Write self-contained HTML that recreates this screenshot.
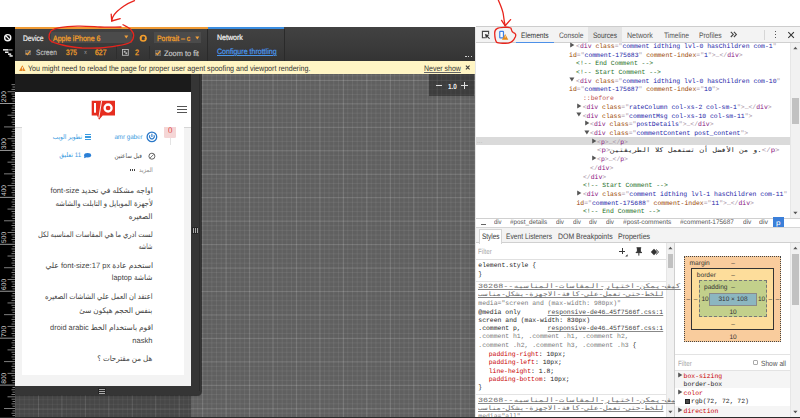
<!DOCTYPE html><html><head><meta charset="utf-8"><style>
*{margin:0;padding:0;box-sizing:border-box}
html,body{width:800px;height:418px;overflow:hidden;background:#fff;font-family:"Liberation Sans",sans-serif;text-rendering:geometricPrecision}
.a{position:absolute;white-space:nowrap}
.ui{font-family:"Liberation Sans",sans-serif;font-size:7px;line-height:8px}
.mono{font-family:"Liberation Mono",monospace;font-size:6.43px;line-height:8px}
</style></head><body><div class="a" style="left:0px;top:26.5px;width:15px;height:391.5px;background:#000"></div><svg class="a" style="left:0;top:26.5px" width="15" height="34" viewBox="0 26.5 15 34"><circle cx="7.7" cy="37.2" r="3.05" fill="none" stroke="#f4f4f4" stroke-width="1.4"/><line x1="5.5" y1="35.0" x2="9.9" y2="39.4" stroke="#f4f4f4" stroke-width="1.3"/><rect x="3" y="48.6" width="5" height="1.5" fill="#f0f0f0"/><rect x="8" y="48.6" width="4.5" height="1.5" fill="#888"/><rect x="5" y="51.0" width="3.5" height="1.5" fill="#f0f0f0"/><rect x="8" y="52.9" width="3.2" height="1.5" fill="#f0f0f0"/><rect x="9.5" y="54.7" width="3.2" height="1.5" fill="#f0f0f0"/></svg><svg class="a" style="left:0;top:0" width="15" height="418" viewBox="0 0 15 418"><rect x="11.5" y="84.22" width="3.5" height="0.9" fill="#8a8a8a"/><rect x="12.5" y="86.57" width="2.5" height="0.9" fill="#8a8a8a"/><rect x="11.5" y="88.92" width="3.5" height="0.9" fill="#8a8a8a"/><rect x="7.5" y="91.27" width="7.5" height="0.9" fill="#8a8a8a"/><rect x="11.5" y="93.61" width="3.5" height="0.9" fill="#8a8a8a"/><rect x="12.5" y="95.96" width="2.5" height="0.9" fill="#8a8a8a"/><rect x="11.5" y="98.31" width="3.5" height="0.9" fill="#8a8a8a"/><rect x="12.5" y="100.65" width="2.5" height="0.9" fill="#8a8a8a"/><rect x="0" y="103.00" width="15" height="0.9" fill="#aaa"/><rect x="12.5" y="105.35" width="2.5" height="0.9" fill="#8a8a8a"/><rect x="11.5" y="107.69" width="3.5" height="0.9" fill="#8a8a8a"/><rect x="12.5" y="110.04" width="2.5" height="0.9" fill="#8a8a8a"/><rect x="11.5" y="112.39" width="3.5" height="0.9" fill="#8a8a8a"/><rect x="7.5" y="114.73" width="7.5" height="0.9" fill="#8a8a8a"/><rect x="11.5" y="117.08" width="3.5" height="0.9" fill="#8a8a8a"/><rect x="12.5" y="119.43" width="2.5" height="0.9" fill="#8a8a8a"/><rect x="11.5" y="121.78" width="3.5" height="0.9" fill="#8a8a8a"/><rect x="12.5" y="124.12" width="2.5" height="0.9" fill="#8a8a8a"/><rect x="4" y="126.47" width="11" height="0.9" fill="#8a8a8a"/><rect x="12.5" y="128.82" width="2.5" height="0.9" fill="#8a8a8a"/><rect x="11.5" y="131.16" width="3.5" height="0.9" fill="#8a8a8a"/><rect x="12.5" y="133.51" width="2.5" height="0.9" fill="#8a8a8a"/><rect x="11.5" y="135.86" width="3.5" height="0.9" fill="#8a8a8a"/><rect x="7.5" y="138.21" width="7.5" height="0.9" fill="#8a8a8a"/><rect x="11.5" y="140.55" width="3.5" height="0.9" fill="#8a8a8a"/><rect x="12.5" y="142.90" width="2.5" height="0.9" fill="#8a8a8a"/><rect x="11.5" y="145.25" width="3.5" height="0.9" fill="#8a8a8a"/><rect x="12.5" y="147.59" width="2.5" height="0.9" fill="#8a8a8a"/><rect x="0" y="149.94" width="15" height="0.9" fill="#aaa"/><rect x="12.5" y="152.29" width="2.5" height="0.9" fill="#8a8a8a"/><rect x="11.5" y="154.63" width="3.5" height="0.9" fill="#8a8a8a"/><rect x="12.5" y="156.98" width="2.5" height="0.9" fill="#8a8a8a"/><rect x="11.5" y="159.33" width="3.5" height="0.9" fill="#8a8a8a"/><rect x="7.5" y="161.68" width="7.5" height="0.9" fill="#8a8a8a"/><rect x="11.5" y="164.02" width="3.5" height="0.9" fill="#8a8a8a"/><rect x="12.5" y="166.37" width="2.5" height="0.9" fill="#8a8a8a"/><rect x="11.5" y="168.72" width="3.5" height="0.9" fill="#8a8a8a"/><rect x="12.5" y="171.06" width="2.5" height="0.9" fill="#8a8a8a"/><rect x="4" y="173.41" width="11" height="0.9" fill="#8a8a8a"/><rect x="12.5" y="175.76" width="2.5" height="0.9" fill="#8a8a8a"/><rect x="11.5" y="178.10" width="3.5" height="0.9" fill="#8a8a8a"/><rect x="12.5" y="180.45" width="2.5" height="0.9" fill="#8a8a8a"/><rect x="11.5" y="182.80" width="3.5" height="0.9" fill="#8a8a8a"/><rect x="7.5" y="185.15" width="7.5" height="0.9" fill="#8a8a8a"/><rect x="11.5" y="187.49" width="3.5" height="0.9" fill="#8a8a8a"/><rect x="12.5" y="189.84" width="2.5" height="0.9" fill="#8a8a8a"/><rect x="11.5" y="192.19" width="3.5" height="0.9" fill="#8a8a8a"/><rect x="12.5" y="194.53" width="2.5" height="0.9" fill="#8a8a8a"/><rect x="0" y="196.88" width="15" height="0.9" fill="#aaa"/><rect x="12.5" y="199.23" width="2.5" height="0.9" fill="#8a8a8a"/><rect x="11.5" y="201.57" width="3.5" height="0.9" fill="#8a8a8a"/><rect x="12.5" y="203.92" width="2.5" height="0.9" fill="#8a8a8a"/><rect x="11.5" y="206.27" width="3.5" height="0.9" fill="#8a8a8a"/><rect x="7.5" y="208.62" width="7.5" height="0.9" fill="#8a8a8a"/><rect x="11.5" y="210.96" width="3.5" height="0.9" fill="#8a8a8a"/><rect x="12.5" y="213.31" width="2.5" height="0.9" fill="#8a8a8a"/><rect x="11.5" y="215.66" width="3.5" height="0.9" fill="#8a8a8a"/><rect x="12.5" y="218.00" width="2.5" height="0.9" fill="#8a8a8a"/><rect x="4" y="220.35" width="11" height="0.9" fill="#8a8a8a"/><rect x="12.5" y="222.70" width="2.5" height="0.9" fill="#8a8a8a"/><rect x="11.5" y="225.04" width="3.5" height="0.9" fill="#8a8a8a"/><rect x="12.5" y="227.39" width="2.5" height="0.9" fill="#8a8a8a"/><rect x="11.5" y="229.74" width="3.5" height="0.9" fill="#8a8a8a"/><rect x="7.5" y="232.09" width="7.5" height="0.9" fill="#8a8a8a"/><rect x="11.5" y="234.43" width="3.5" height="0.9" fill="#8a8a8a"/><rect x="12.5" y="236.78" width="2.5" height="0.9" fill="#8a8a8a"/><rect x="11.5" y="239.13" width="3.5" height="0.9" fill="#8a8a8a"/><rect x="12.5" y="241.47" width="2.5" height="0.9" fill="#8a8a8a"/><rect x="0" y="243.82" width="15" height="0.9" fill="#aaa"/><rect x="12.5" y="246.17" width="2.5" height="0.9" fill="#8a8a8a"/><rect x="11.5" y="248.51" width="3.5" height="0.9" fill="#8a8a8a"/><rect x="12.5" y="250.86" width="2.5" height="0.9" fill="#8a8a8a"/><rect x="11.5" y="253.21" width="3.5" height="0.9" fill="#8a8a8a"/><rect x="7.5" y="255.56" width="7.5" height="0.9" fill="#8a8a8a"/><rect x="11.5" y="257.90" width="3.5" height="0.9" fill="#8a8a8a"/><rect x="12.5" y="260.25" width="2.5" height="0.9" fill="#8a8a8a"/><rect x="11.5" y="262.60" width="3.5" height="0.9" fill="#8a8a8a"/><rect x="12.5" y="264.94" width="2.5" height="0.9" fill="#8a8a8a"/><rect x="4" y="267.29" width="11" height="0.9" fill="#8a8a8a"/><rect x="12.5" y="269.64" width="2.5" height="0.9" fill="#8a8a8a"/><rect x="11.5" y="271.98" width="3.5" height="0.9" fill="#8a8a8a"/><rect x="12.5" y="274.33" width="2.5" height="0.9" fill="#8a8a8a"/><rect x="11.5" y="276.68" width="3.5" height="0.9" fill="#8a8a8a"/><rect x="7.5" y="279.02" width="7.5" height="0.9" fill="#8a8a8a"/><rect x="11.5" y="281.37" width="3.5" height="0.9" fill="#8a8a8a"/><rect x="12.5" y="283.72" width="2.5" height="0.9" fill="#8a8a8a"/><rect x="11.5" y="286.07" width="3.5" height="0.9" fill="#8a8a8a"/><rect x="12.5" y="288.41" width="2.5" height="0.9" fill="#8a8a8a"/><rect x="0" y="290.76" width="15" height="0.9" fill="#aaa"/><rect x="12.5" y="293.11" width="2.5" height="0.9" fill="#8a8a8a"/><rect x="11.5" y="295.45" width="3.5" height="0.9" fill="#8a8a8a"/><rect x="12.5" y="297.80" width="2.5" height="0.9" fill="#8a8a8a"/><rect x="11.5" y="300.15" width="3.5" height="0.9" fill="#8a8a8a"/><rect x="7.5" y="302.50" width="7.5" height="0.9" fill="#8a8a8a"/><rect x="11.5" y="304.84" width="3.5" height="0.9" fill="#8a8a8a"/><rect x="12.5" y="307.19" width="2.5" height="0.9" fill="#8a8a8a"/><rect x="11.5" y="309.54" width="3.5" height="0.9" fill="#8a8a8a"/><rect x="12.5" y="311.88" width="2.5" height="0.9" fill="#8a8a8a"/><rect x="4" y="314.23" width="11" height="0.9" fill="#8a8a8a"/><rect x="12.5" y="316.58" width="2.5" height="0.9" fill="#8a8a8a"/><rect x="11.5" y="318.92" width="3.5" height="0.9" fill="#8a8a8a"/><rect x="12.5" y="321.27" width="2.5" height="0.9" fill="#8a8a8a"/><rect x="11.5" y="323.62" width="3.5" height="0.9" fill="#8a8a8a"/><rect x="7.5" y="325.96" width="7.5" height="0.9" fill="#8a8a8a"/><rect x="11.5" y="328.31" width="3.5" height="0.9" fill="#8a8a8a"/><rect x="12.5" y="330.66" width="2.5" height="0.9" fill="#8a8a8a"/><rect x="11.5" y="333.01" width="3.5" height="0.9" fill="#8a8a8a"/><rect x="12.5" y="335.35" width="2.5" height="0.9" fill="#8a8a8a"/><rect x="0" y="337.70" width="15" height="0.9" fill="#aaa"/><rect x="12.5" y="340.05" width="2.5" height="0.9" fill="#8a8a8a"/><rect x="11.5" y="342.39" width="3.5" height="0.9" fill="#8a8a8a"/><rect x="12.5" y="344.74" width="2.5" height="0.9" fill="#8a8a8a"/><rect x="11.5" y="347.09" width="3.5" height="0.9" fill="#8a8a8a"/><rect x="7.5" y="349.44" width="7.5" height="0.9" fill="#8a8a8a"/><rect x="11.5" y="351.78" width="3.5" height="0.9" fill="#8a8a8a"/><rect x="12.5" y="354.13" width="2.5" height="0.9" fill="#8a8a8a"/><rect x="11.5" y="356.48" width="3.5" height="0.9" fill="#8a8a8a"/><rect x="12.5" y="358.82" width="2.5" height="0.9" fill="#8a8a8a"/><rect x="4" y="361.17" width="11" height="0.9" fill="#8a8a8a"/><rect x="12.5" y="363.52" width="2.5" height="0.9" fill="#8a8a8a"/><rect x="11.5" y="365.86" width="3.5" height="0.9" fill="#8a8a8a"/><rect x="12.5" y="368.21" width="2.5" height="0.9" fill="#8a8a8a"/><rect x="11.5" y="370.56" width="3.5" height="0.9" fill="#8a8a8a"/><rect x="7.5" y="372.90" width="7.5" height="0.9" fill="#8a8a8a"/><rect x="11.5" y="375.25" width="3.5" height="0.9" fill="#8a8a8a"/><rect x="12.5" y="377.60" width="2.5" height="0.9" fill="#8a8a8a"/><rect x="11.5" y="379.95" width="3.5" height="0.9" fill="#8a8a8a"/><rect x="12.5" y="382.29" width="2.5" height="0.9" fill="#8a8a8a"/><rect x="0" y="384.64" width="15" height="0.9" fill="#aaa"/><rect x="12.5" y="386.99" width="2.5" height="0.9" fill="#8a8a8a"/><rect x="11.5" y="389.33" width="3.5" height="0.9" fill="#8a8a8a"/><rect x="12.5" y="391.68" width="2.5" height="0.9" fill="#8a8a8a"/><rect x="11.5" y="394.03" width="3.5" height="0.9" fill="#8a8a8a"/><rect x="7.5" y="396.38" width="7.5" height="0.9" fill="#8a8a8a"/><rect x="11.5" y="398.72" width="3.5" height="0.9" fill="#8a8a8a"/><rect x="12.5" y="401.07" width="2.5" height="0.9" fill="#8a8a8a"/><rect x="11.5" y="403.42" width="3.5" height="0.9" fill="#8a8a8a"/><rect x="12.5" y="405.76" width="2.5" height="0.9" fill="#8a8a8a"/><rect x="4" y="408.11" width="11" height="0.9" fill="#8a8a8a"/><rect x="12.5" y="410.46" width="2.5" height="0.9" fill="#8a8a8a"/><rect x="11.5" y="412.80" width="3.5" height="0.9" fill="#8a8a8a"/><rect x="12.5" y="415.15" width="2.5" height="0.9" fill="#8a8a8a"/><rect x="11.5" y="417.50" width="3.5" height="0.9" fill="#8a8a8a"/><text x="0" y="0" transform="translate(6.4,102.20) rotate(-90)" font-family="Liberation Sans" font-size="6.7" fill="#d8d8d8">200</text><text x="0" y="0" transform="translate(6.4,149.14) rotate(-90)" font-family="Liberation Sans" font-size="6.7" fill="#d8d8d8">300</text><text x="0" y="0" transform="translate(6.4,196.08) rotate(-90)" font-family="Liberation Sans" font-size="6.7" fill="#d8d8d8">400</text><text x="0" y="0" transform="translate(6.4,243.02) rotate(-90)" font-family="Liberation Sans" font-size="6.7" fill="#d8d8d8">500</text><text x="0" y="0" transform="translate(6.4,289.96) rotate(-90)" font-family="Liberation Sans" font-size="6.7" fill="#d8d8d8">600</text><text x="0" y="0" transform="translate(6.4,336.90) rotate(-90)" font-family="Liberation Sans" font-size="6.7" fill="#d8d8d8">700</text><text x="0" y="0" transform="translate(6.4,383.84) rotate(-90)" font-family="Liberation Sans" font-size="6.7" fill="#d8d8d8">800</text></svg><div class="a" style="left:15px;top:26.5px;width:460px;height:34.2px;background:linear-gradient(#424242,#3a3a3a 60%,#333)"></div><div class="a" style="left:15px;top:26.8px;width:192.5px;height:2.3px;background:#ef9a34"></div><div class="a" style="left:207.5px;top:26.8px;width:76.5px;height:2.3px;background:#3a8de0"></div><div class="a" style="left:207px;top:29px;width:1px;height:31.5px;background:#2a2a2a"></div><div class="a" style="left:284px;top:29px;width:1px;height:31.5px;background:#2a2a2a"></div><div class="a" style="left:23.00px;top:33.60px;line-height:10px;font-family:'Liberation Sans',sans-serif;font-size:8.09px;color:#f2f2f2;transform-origin:0 50%;transform:scaleX(0.8291);-webkit-text-stroke:0.2px #f2f2f2">Device</div><div class="a" style="left:51px;top:31.5px;width:81px;height:11.5px;background:#4b4b4b"></div><div class="a" style="left:53.00px;top:33.60px;line-height:10px;font-family:'Liberation Sans',sans-serif;font-size:7.82px;color:#f5a02a;transform-origin:0 50%;transform:scaleX(0.8954);-webkit-text-stroke:0.25px #f5a02a">Apple iPhone 6</div><svg class="a" style="left:124px;top:35px" width="5" height="4"><path d="M0.3 0.5 L4.3 0.5 L2.3 3.5Z" fill="#f0a03c"/></svg><svg class="a" style="left:139.15px;top:33.8px" width="8.5" height="8.5" viewBox="0 0 8.5 8.5"><circle cx="4.25" cy="4.25" r="2.75" fill="none" stroke="#f29e2e" stroke-width="1.6"/><path d="M0.6 3.6 L2.3 5.2 L3.2 3.2Z M7.9 4.9 L6.2 3.3 L5.3 5.3Z" fill="#f29e2e"/></svg><div class="a" style="left:153.8px;top:32.1px;width:46.8px;height:10.5px;background:#4b4b4b"></div><div class="a" style="left:156.80px;top:33.60px;line-height:10px;font-family:'Liberation Sans',sans-serif;font-size:7.82px;color:#f5a02a;transform-origin:0 50%;transform:scaleX(0.8782);-webkit-text-stroke:0.25px #f5a02a">Portrait – c</div><svg class="a" style="left:194.5px;top:35.5px" width="5" height="4"><path d="M0.3 0.5 L4.3 0.5 L2.3 3.5Z" fill="#f0a03c"/></svg><div class="a" style="left:25px;top:49.8px;width:5.6px;height:5.6px;background:#555;border:0.6px solid #666"></div><svg class="a" style="left:25px;top:49.8px" width="6" height="6" viewBox="0 0 6 6"><path d="M0.9 3.1 L2.4 4.6 L5.3 0.9" fill="none" stroke="#f0a03c" stroke-width="1.2"/></svg><div class="a" style="left:36.20px;top:48.30px;line-height:10px;font-family:'Liberation Sans',sans-serif;font-size:7.75px;color:#c0c0c0;transform-origin:0 50%;transform:scaleX(0.8466);-webkit-text-stroke:0.15px #c0c0c0">Screen</div><div class="a" style="left:65.50px;top:48.30px;line-height:10px;font-family:'Liberation Sans',sans-serif;font-size:7.75px;color:#f5a02a;transform-origin:0 50%;transform:scaleX(0.8499);-webkit-text-stroke:0.25px #f5a02a">375</div><div class="a" style="left:83.50px;top:47.90px;line-height:10px;font-family:'Liberation Sans',sans-serif;font-size:7.60px;color:#999;transform-origin:0 50%;transform:scaleX(0.6748);">×</div><div class="a" style="left:94.50px;top:48.30px;line-height:10px;font-family:'Liberation Sans',sans-serif;font-size:7.75px;color:#f5a02a;transform-origin:0 50%;transform:scaleX(0.8885);-webkit-text-stroke:0.25px #f5a02a">627</div><div class="a" style="left:115.5px;top:46px;width:0.8px;height:13px;background:#2e2e2e"></div><svg class="a" style="left:121.5px;top:48.7px" width="7" height="7" viewBox="0 0 7 7"><rect x="0.5" y="0.5" width="5.8" height="5.8" fill="none" stroke="#bbb" stroke-width="0.9"/><rect x="1.8" y="1.8" width="1.8" height="1.8" fill="#bbb"/><rect x="3.4" y="3.4" width="1.8" height="1.8" fill="#bbb"/></svg><div class="a" style="left:135.00px;top:48.30px;line-height:10px;font-family:'Liberation Sans',sans-serif;font-size:7.75px;color:#f5a02a;transform-origin:0 50%;transform:scaleX(0.9299);-webkit-text-stroke:0.25px #f5a02a">2</div><div class="a" style="left:148.5px;top:46px;width:0.8px;height:13px;background:#2e2e2e"></div><div class="a" style="left:155px;top:50px;width:5.6px;height:5.6px;background:#555;border:0.6px solid #666"></div><svg class="a" style="left:155px;top:50px" width="6" height="6" viewBox="0 0 6 6"><path d="M0.9 3.1 L2.4 4.6 L5.3 0.9" fill="none" stroke="#f0a03c" stroke-width="1.2"/></svg><div class="a" style="left:164.25px;top:49.10px;line-height:10px;font-family:'Liberation Sans',sans-serif;font-size:7.82px;color:#c8c8c8;transform-origin:0 50%;transform:scaleX(0.9460);-webkit-text-stroke:0.15px #c8c8c8">Zoom to fit</div><div class="a" style="left:216.80px;top:32.90px;line-height:10px;font-family:'Liberation Sans',sans-serif;font-size:7.82px;color:#f4f4f4;transform-origin:0 50%;transform:scaleX(0.9014);-webkit-text-stroke:0.2px #f4f4f4">Network</div><div class="a" style="left:216.80px;top:46.90px;line-height:10px;font-family:'Liberation Sans',sans-serif;font-size:7.82px;color:#4a98ee;transform-origin:0 50%;transform:scaleX(0.9021);text-decoration:underline;-webkit-text-stroke:0.2px #4a98ee">Configure throttling</div><div class="a" style="left:465.3px;top:56px;width:1.3px;height:1.3px;background:#d0d0d0"></div><div class="a" style="left:467.9px;top:56px;width:1.3px;height:1.3px;background:#d0d0d0"></div><div class="a" style="left:470.5px;top:56px;width:1.3px;height:1.3px;background:#d0d0d0"></div><div class="a" style="left:15px;top:60.7px;width:459.5px;height:13px;background:#fff5c4"></div><svg class="a" style="left:18.5px;top:64.8px" width="7" height="6.5" viewBox="0 0 7 6.5"><path d="M3.3 0.3 L6.5 6 L0.1 6Z" fill="#e6841e"/><rect x="2.95" y="2" width="0.75" height="2.2" fill="#fff"/><rect x="2.95" y="4.7" width="0.75" height="0.75" fill="#fff"/></svg><div class="a" style="left:27.70px;top:63.90px;line-height:10px;font-family:'Liberation Sans',sans-serif;font-size:7.96px;color:#333;transform-origin:0 50%;transform:scaleX(0.8956);">You might need to reload the page for proper user agent spoofing and viewport rendering.</div><div class="a" style="left:424.10px;top:63.90px;line-height:10px;font-family:'Liberation Sans',sans-serif;font-size:7.96px;color:#333;transform-origin:0 50%;transform:scaleX(0.8776);text-decoration:underline;text-decoration-color:#666">Never show</div><svg class="a" style="left:464px;top:64px" width="7" height="7" viewBox="464 64 7 7"><path d="M465.9 65.7 L469.6 69.4 M469.6 65.7 L465.9 69.4" stroke="#3a3a3a" stroke-width="1.05"/></svg><div class="a" style="left:15px;top:73.6px;width:460px;height:343.6px;background-color:#606060;background-image:linear-gradient(to right,rgba(255,255,255,0.11) 1.1px,transparent 1.1px),linear-gradient(to bottom,rgba(255,255,255,0.11) 1.1px,transparent 1.1px),linear-gradient(to right,rgba(255,255,255,0.065) 1px,transparent 1px),linear-gradient(to bottom,rgba(255,255,255,0.065) 1px,transparent 1px);background-size:23.47px 23.47px,23.47px 23.47px,4.694px 4.694px,4.694px 4.694px;background-position:-0.50px 0,0 5.93px,-0.50px 0,0 1.24px"></div><div class="a" style="left:15px;top:395.5px;width:176px;height:22px;background-color:#474747;background-image:linear-gradient(to right,rgba(255,255,255,0.09) 1.1px,transparent 1.1px),linear-gradient(to bottom,rgba(255,255,255,0.09) 1.1px,transparent 1.1px),linear-gradient(to right,rgba(255,255,255,0.045) 1px,transparent 1px),linear-gradient(to bottom,rgba(255,255,255,0.045) 1px,transparent 1px);background-size:23.47px 23.47px,23.47px 23.47px,4.694px 4.694px,4.694px 4.694px;background-position:-0.50px 0,0 12.61px,-0.50px 0,0 3.22px"></div><div class="a" style="left:428.8px;top:73.6px;width:45.7px;height:22.7px;background:rgba(20,20,20,0.45)"></div><div class="a" style="left:436px;top:84.9px;width:6.4px;height:1.1px;background:#e0e0e0"></div><div class="a" style="left:448.10px;top:81.80px;line-height:10px;font-family:'Liberation Sans',sans-serif;font-size:7.41px;color:#eeeeee;transform-origin:0 50%;transform:scaleX(0.8547);font-weight:bold">1.0</div><div class="a" style="left:460.8px;top:84.9px;width:7.1px;height:1.2px;background:#e0e0e0"></div><div class="a" style="left:463.75px;top:82px;width:1.2px;height:6.9px;background:#e0e0e0"></div><div class="a" style="left:474.9px;top:26.5px;width:1.0px;height:391.5px;background:#e6e6e6"></div><div class="a" style="left:15px;top:73.6px;width:176px;height:18.4px;background:#1b1b1b"></div><div class="a" style="left:15px;top:73.6px;width:185.5px;height:321.9px;background:#353535;border-bottom-right-radius:4.5px;box-shadow:0.5px 0.5px 0.8px rgba(0,0,0,0.5)"></div><div class="a" style="left:198.8px;top:73.6px;width:1.4px;height:317.6px;background:#2b2b2b"></div><div class="a" style="left:192.2px;top:226.8px;width:6.3px;height:7.2px;background:#262626"></div><div class="a" style="left:193.1px;top:227.6px;width:0.9px;height:5.6px;background:#aaa"></div><div class="a" style="left:195.1px;top:227.6px;width:0.9px;height:5.6px;background:#aaa"></div><div class="a" style="left:197.1px;top:227.6px;width:0.9px;height:5.6px;background:#aaa"></div><div class="a" style="left:98px;top:387.8px;width:8px;height:6.2px;background:#262626"></div><div class="a" style="left:99px;top:388.6px;width:6px;height:0.8px;background:#aaa"></div><div class="a" style="left:99px;top:390.6px;width:6px;height:0.8px;background:#aaa"></div><div class="a" style="left:99px;top:392.6px;width:6px;height:0.8px;background:#aaa"></div><div class="a" style="left:15px;top:73.6px;width:176px;height:18.4px;background:#1b1b1b"></div><div class="a" style="left:15px;top:92px;width:176px;height:294px;background:#f3f3f3"></div><div class="a" style="left:15px;top:92px;width:176px;height:35.8px;background:#fff;border-bottom:0.9px solid #d6d6d6"></div><div class="a" style="left:22px;top:127px;width:162px;height:248px;background:#fff"></div><svg class="a" style="left:90px;top:99px" width="28" height="22" viewBox="90 99 28 22"><path d="M91.7 100.8 H115 V115.6 H102.7 L99.1 119.8 L97 115.6 H91.7Z" fill="#e62d1f"/><rect x="94" y="103" width="2" height="9.7" fill="#fff"/><line x1="101.6" y1="101" x2="98.8" y2="118" stroke="#fff" stroke-width="0.9"/><circle cx="108.1" cy="108" r="3.5" fill="none" stroke="#fff" stroke-width="2.3"/></svg><div class="a" style="left:177px;top:106.2px;width:9.6px;height:1.0px;background:#555"></div><div class="a" style="left:177px;top:109.3px;width:9.6px;height:1.0px;background:#555"></div><div class="a" style="left:177px;top:112.4px;width:9.6px;height:1.0px;background:#555"></div><div class="a" style="left:164.4px;top:127px;width:12px;height:10.6px;background:#f5d6d6;border-radius:0 0 1.5px 1.5px"></div><div class="a" style="left:168.20px;top:125.50px;line-height:10px;font-family:'Liberation Sans',sans-serif;font-size:8.23px;color:#e04848;transform-origin:0 50%;transform:scaleX(0.9632);">0</div><div class="a" style="left:170.2px;top:137.6px;width:0.8px;height:7.7px;background:#e4e4e4"></div><div class="a" style="left:-57.099999999999994px;top:133.00px;width:200px;line-height:10px;text-align:right;direction:rtl;color:#3a9be0;font-size:6.7px;direction:ltr"><span id="r0" style="display:inline-block;transform-origin:100% 50%;transform:scaleX(0.9218)">amr gaber</span></div><svg class="a" style="left:145px;top:129.5px" width="14" height="14" viewBox="145 129.5 14 14"><circle cx="151.9" cy="136.4" r="4.8" fill="#fff" stroke="#2a78c8" stroke-width="1.3"/><path d="M149.9 134.6 A2.4 2.4 0 1 0 153.9 134.6" fill="none" stroke="#2a78c8" stroke-width="1.1"/><line x1="151.9" y1="133.3" x2="151.9" y2="136.6" stroke="#2a78c8" stroke-width="1.1"/></svg><div class="a" style="left:-117.9px;top:132.80px;width:200px;line-height:10px;text-align:right;direction:rtl;color:#3a9be0;font-size:6.5px"><span id="r1" style="display:inline-block;transform-origin:100% 50%;transform:scaleX(0.8866)">تطوير الويب</span></div><div class="a" style="left:85.1px;top:134.4px;width:6px;height:0.9px;background:#3a9be0"></div><div class="a" style="left:85.1px;top:135.9px;width:6px;height:0.9px;background:#3a9be0"></div><div class="a" style="left:85.1px;top:137.4px;width:6px;height:0.9px;background:#3a9be0"></div><div class="a" style="left:85.1px;top:138.9px;width:6px;height:0.9px;background:#3a9be0"></div><div class="a" style="left:-57.69999999999999px;top:152.20px;width:200px;line-height:10px;text-align:right;direction:rtl;color:#555;font-size:6.5px"><span id="r2" style="display:inline-block;transform-origin:100% 50%;transform:scaleX(0.8598)">قبل ساعتين</span></div><svg class="a" style="left:148px;top:152px" width="8" height="8" viewBox="148 152 8 8"><circle cx="151.9" cy="156.2" r="3.0" fill="none" stroke="#555" stroke-width="0.9"/><path d="M150.1 158 L153.7 154.4" fill="none" stroke="#555" stroke-width="0.8"/></svg><div class="a" style="left:-119.1px;top:151.20px;width:200px;line-height:10px;text-align:right;direction:rtl;color:#3a9be0;font-size:6.5px"><span id="r3" style="display:inline-block;transform-origin:100% 50%;transform:scaleX(0.9459)">11 تعليق</span></div><svg class="a" style="left:83px;top:152px" width="9" height="7" viewBox="83 152 9 7"><ellipse cx="87.6" cy="155.3" rx="3.5" ry="2.2" fill="#2a7fd6"/><path d="M84.5 156 L84 158.2 L86.5 157.2Z" fill="#2a7fd6"/></svg><div class="a" style="left:-47.5px;top:165.90px;width:200px;line-height:10px;text-align:right;direction:rtl;color:#888;font-size:6.3px"><span id="r4" style="display:inline-block;transform-origin:100% 50%;transform:scaleX(0.8710)">المزيد</span></div><div class="a" style="left:129.8px;top:169.3px;width:1.3px;height:1.3px;background:#444"></div><div class="a" style="left:131.8px;top:169.3px;width:1.3px;height:1.3px;background:#444"></div><div class="a" style="left:133.8px;top:169.3px;width:1.3px;height:1.3px;background:#444"></div><div class="a" style="left:-47.400000000000006px;top:185.30px;width:200px;line-height:12px;text-align:right;direction:rtl;color:#444;font-size:7.7px"><span id="r5" style="display:inline-block;transform-origin:100% 50%;transform:scaleX(0.9851)">اواجه مشكله في تحديد font-size</span></div><div class="a" style="left:-47.400000000000006px;top:198.20px;width:200px;line-height:12px;text-align:right;direction:rtl;color:#444;font-size:7.7px"><span id="r6" style="display:inline-block;transform-origin:100% 50%;transform:scaleX(0.9038)">لأجهزة الموبايل و التابلت والشاشه</span></div><div class="a" style="left:-47.400000000000006px;top:210.90px;width:200px;line-height:12px;text-align:right;direction:rtl;color:#444;font-size:7.7px"><span id="r7" style="display:inline-block;transform-origin:100% 50%;transform:scaleX(0.9351)">الصغيره</span></div><div class="a" style="left:-47.400000000000006px;top:228.80px;width:200px;line-height:12px;text-align:right;direction:rtl;color:#444;font-size:7.7px"><span id="r8" style="display:inline-block;transform-origin:100% 50%;transform:scaleX(0.8716)">لست ادري ما هي المقاسات المناسبه لكل</span></div><div class="a" style="left:-47.400000000000006px;top:241.30px;width:200px;line-height:12px;text-align:right;direction:rtl;color:#444;font-size:7.7px"><span id="r9" style="display:inline-block;transform-origin:100% 50%;transform:scaleX(0.7077)">شاشه</span></div><div class="a" style="left:-47.400000000000006px;top:259.50px;width:200px;line-height:12px;text-align:right;direction:rtl;color:#444;font-size:7.7px"><span id="r10" style="display:inline-block;transform-origin:100% 50%;transform:scaleX(0.9872)">استخدم عادة font-size:17 px علي</span></div><div class="a" style="left:-47.400000000000006px;top:272.20px;width:200px;line-height:12px;text-align:right;direction:rtl;color:#444;font-size:7.7px"><span id="r11" style="display:inline-block;transform-origin:100% 50%;transform:scaleX(0.9567)">شاشة laptop</span></div><div class="a" style="left:-47.400000000000006px;top:290.90px;width:200px;line-height:12px;text-align:right;direction:rtl;color:#444;font-size:7.7px"><span id="r12" style="display:inline-block;transform-origin:100% 50%;transform:scaleX(0.8779)">اعتقد ان العمل علي الشاشات الصغيره</span></div><div class="a" style="left:-47.400000000000006px;top:304.80px;width:200px;line-height:12px;text-align:right;direction:rtl;color:#444;font-size:7.7px"><span id="r13" style="display:inline-block;transform-origin:100% 50%;transform:scaleX(0.9459)">بنفس الحجم هيكون سئ</span></div><div class="a" style="left:-47.400000000000006px;top:322.40px;width:200px;line-height:12px;text-align:right;direction:rtl;color:#444;font-size:7.7px"><span id="r14" style="display:inline-block;transform-origin:100% 50%;transform:scaleX(0.9617)">اقوم باستخدام الخط droid arabic</span></div><div class="a" style="left:-47.400000000000006px;top:335.10px;width:200px;line-height:12px;text-align:right;direction:rtl;color:#444;font-size:7.7px"><span id="r15" style="display:inline-block;transform-origin:100% 50%;transform:scaleX(0.9895)">naskh</span></div><div class="a" style="left:-47.400000000000006px;top:352.60px;width:200px;line-height:12px;text-align:right;direction:rtl;color:#444;font-size:7.7px"><span id="r16" style="display:inline-block;transform-origin:100% 50%;transform:scaleX(0.9302)">هل من مقترحات ؟</span></div><div class="a" style="left:475.7px;top:26.2px;width:324.3px;height:391.8px;background:#fff"></div><div class="a" style="left:475.7px;top:26.2px;width:324.3px;height:16.8px;background:#f3f3f3;border-top:0.7px solid #cdcdcd;border-bottom:0.7px solid #d0d0d0"></div><div class="a" style="left:588.2px;top:27px;width:33.8px;height:15.7px;background:#e4e4e4"></div><div class="a" style="left:516px;top:41.6px;width:38px;height:1.5px;background:#4d90e8"></div><svg class="a" style="left:481px;top:30px" width="10" height="10" viewBox="481 30 10 10"><path d="M485.8 37.7 H482.4 V31.4 H488.6 V34.4" fill="none" stroke="#444" stroke-width="1.1"/><path d="M484.9 33.9 L489.4 35.3 L487.7 36.1 L490 38.4 L489.2 39.1 L487 36.9 L486.1 38.6Z" fill="#333"/></svg><svg class="a" style="left:497px;top:29px" width="13" height="11" viewBox="497 29 13 11"><rect x="499.75" y="31.4" width="3.7" height="6.5" rx="0.5" fill="#fdfdfd" stroke="#3b80e6" stroke-width="1.2"/><path d="M505.15 33.9 L508.3 39.7 L502.0 39.7Z" fill="#e58a18"/><rect x="504.85" y="35.6" width="0.6" height="2" fill="#fff"/></svg><div class="a" style="left:521.25px;top:30.65px;line-height:10px;font-family:'Liberation Sans',sans-serif;font-size:7.89px;color:#333;transform-origin:0 50%;transform:scaleX(0.8437);">Elements</div><div class="a" style="left:558.50px;top:30.65px;line-height:10px;font-family:'Liberation Sans',sans-serif;font-size:7.89px;color:#555;transform-origin:0 50%;transform:scaleX(0.8464);">Console</div><div class="a" style="left:593.20px;top:30.65px;line-height:10px;font-family:'Liberation Sans',sans-serif;font-size:7.89px;color:#444;transform-origin:0 50%;transform:scaleX(0.8291);">Sources</div><div class="a" style="left:627.20px;top:30.65px;line-height:10px;font-family:'Liberation Sans',sans-serif;font-size:7.89px;color:#555;transform-origin:0 50%;transform:scaleX(0.8970);">Network</div><div class="a" style="left:664.00px;top:30.65px;line-height:10px;font-family:'Liberation Sans',sans-serif;font-size:7.89px;color:#555;transform-origin:0 50%;transform:scaleX(0.8475);">Timeline</div><div class="a" style="left:699.40px;top:30.65px;line-height:10px;font-family:'Liberation Sans',sans-serif;font-size:7.89px;color:#555;transform-origin:0 50%;transform:scaleX(0.8592);">Profiles</div><svg class="a" style="left:729px;top:30px" width="10" height="9" viewBox="729 30 10 9"><path d="M730.8 31.8 L733.3 34.4 L730.8 37 M733.9 31.8 L736.4 34.4 L733.9 37" fill="none" stroke="#444" stroke-width="1.1"/></svg><div class="a" style="left:764px;top:30px;width:0.8px;height:10px;background:#d6d6d6"></div><div class="a" style="left:774.8px;top:31.3px;width:1.2px;height:1.2px;background:#555"></div><div class="a" style="left:774.8px;top:34.3px;width:1.2px;height:1.2px;background:#555"></div><div class="a" style="left:774.8px;top:37.3px;width:1.2px;height:1.2px;background:#555"></div><svg class="a" style="left:787px;top:30.5px" width="8" height="8" viewBox="0 0 8 8"><path d="M1.3 1.1 L6.9 6.9 M6.9 1.1 L1.3 6.9" stroke="#333" stroke-width="1.05"/></svg><div class="a" style="left:476.0px;top:137px;width:314.0px;height:7.7px;background:#dadada"></div><div class="a ui" style="left:477px;top:137.5px;color:#aaa;font-size:6px;letter-spacing:0.2px">...</div><svg class="a" style="left:569.60px;top:41.80px" width="5" height="6" viewBox="0 0 5 6"><path d="M0.2 0.6 L4.4 3 L0.2 5.4Z" fill="#555"/></svg><div class="a mono" style="left:576.1px;top:42.80px;"><span style="color:#a894a6">&lt;</span><span style="color:#881280">div</span> <span style="color:#994500">class</span><span style="color:#a894a6">="</span><span style="color:#1a1aa6">comment idthing lvl-0 hasChildren com-1</span><span style="color:#a894a6">"</span></div><div class="a mono" style="left:569.1px;top:51.52px;"><span style="color:#994500">id</span><span style="color:#a894a6">="</span><span style="color:#1a1aa6">comment-175683</span><span style="color:#a894a6">"</span> <span style="color:#994500">comment-index</span><span style="color:#a894a6">="</span><span style="color:#1a1aa6">1</span><span style="color:#a894a6">"</span><span style="color:#a894a6">&gt;</span><span style="color:#a894a6">…</span><span style="color:#a894a6">&lt;/</span><span style="color:#881280">div</span><span style="color:#a894a6">&gt;</span></div><div class="a mono" style="left:576.1px;top:60.24px;"><span style="color:#236e25">&lt;!-- End Comment --&gt;</span></div><div class="a mono" style="left:576.1px;top:68.96px;"><span style="color:#236e25">&lt;!-- Start Comment --&gt;</span></div><svg class="a" style="left:568.50px;top:77.28px" width="6" height="5" viewBox="0 0 6 5"><path d="M0.4 0.4 L5.4 0.4 L2.9 4.6Z" fill="#555"/></svg><div class="a mono" style="left:576.1px;top:77.68px;"><span style="color:#a894a6">&lt;</span><span style="color:#881280">div</span> <span style="color:#994500">class</span><span style="color:#a894a6">="</span><span style="color:#1a1aa6">comment idthing lvl-0 hasChildren com-10</span><span style="color:#a894a6">"</span></div><div class="a mono" style="left:569.1px;top:86.40px;"><span style="color:#994500">id</span><span style="color:#a894a6">="</span><span style="color:#1a1aa6">comment-175687</span><span style="color:#a894a6">"</span> <span style="color:#994500">comment-index</span><span style="color:#a894a6">="</span><span style="color:#1a1aa6">10</span><span style="color:#a894a6">"</span><span style="color:#a894a6">&gt;</span></div><div class="a mono" style="left:583px;top:95.12px;"><span style="color:#c0504d">::before</span></div><svg class="a" style="left:576.90px;top:102.84px" width="5" height="6" viewBox="0 0 5 6"><path d="M0.2 0.6 L4.4 3 L0.2 5.4Z" fill="#555"/></svg><div class="a mono" style="left:582.75px;top:103.84px;"><span style="color:#a894a6">&lt;</span><span style="color:#881280">div</span> <span style="color:#994500">class</span><span style="color:#a894a6">="</span><span style="color:#1a1aa6">rateColumn col-xs-2 col-sm-1</span><span style="color:#a894a6">"</span><span style="color:#a894a6">&gt;</span><span style="color:#a894a6">…</span><span style="color:#a894a6">&lt;/</span><span style="color:#881280">div</span><span style="color:#a894a6">&gt;</span></div><svg class="a" style="left:575.80px;top:112.16px" width="6" height="5" viewBox="0 0 6 5"><path d="M0.4 0.4 L5.4 0.4 L2.9 4.6Z" fill="#555"/></svg><div class="a mono" style="left:582.75px;top:112.56px;"><span style="color:#a894a6">&lt;</span><span style="color:#881280">div</span> <span style="color:#994500">class</span><span style="color:#a894a6">="</span><span style="color:#1a1aa6">commentMsg col-xs-10 col-sm-11</span><span style="color:#a894a6">"</span><span style="color:#a894a6">&gt;</span></div><svg class="a" style="left:584.80px;top:120.28px" width="5" height="6" viewBox="0 0 5 6"><path d="M0.2 0.6 L4.4 3 L0.2 5.4Z" fill="#555"/></svg><div class="a mono" style="left:590.1px;top:121.28px;"><span style="color:#a894a6">&lt;</span><span style="color:#881280">div</span> <span style="color:#994500">class</span><span style="color:#a894a6">="</span><span style="color:#1a1aa6">postDetails</span><span style="color:#a894a6">"</span><span style="color:#a894a6">&gt;</span><span style="color:#a894a6">…</span><span style="color:#a894a6">&lt;/</span><span style="color:#881280">div</span><span style="color:#a894a6">&gt;</span></div><svg class="a" style="left:583.70px;top:129.60px" width="6" height="5" viewBox="0 0 6 5"><path d="M0.4 0.4 L5.4 0.4 L2.9 4.6Z" fill="#555"/></svg><div class="a mono" style="left:590.1px;top:130.00px;"><span style="color:#a894a6">&lt;</span><span style="color:#881280">div</span> <span style="color:#994500">class</span><span style="color:#a894a6">="</span><span style="color:#1a1aa6">commentContent post_content</span><span style="color:#a894a6">"</span><span style="color:#a894a6">&gt;</span></div><svg class="a" style="left:591.80px;top:137.72px" width="5" height="6" viewBox="0 0 5 6"><path d="M0.2 0.6 L4.4 3 L0.2 5.4Z" fill="#555"/></svg><div class="a mono" style="left:597.1px;top:138.72px;"><span style="color:#a894a6">&lt;</span><span style="color:#881280">p</span><span style="color:#a894a6">&gt;</span><span style="color:#a894a6">…</span><span style="color:#a894a6">&lt;/</span><span style="color:#881280">p</span><span style="color:#a894a6">&gt;</span></div><div class="a mono" style="left:596.6px;top:147.44px;"><span id="r17" style="display:inline-block;transform-origin:0 50%;transform:scaleX(1.1525);"><span style="color:#a894a6">&lt;</span><span style="color:#881280">p</span><span style="color:#a894a6">&gt;</span><span style="color:#222">و من الأفضل أن تستعمل كلا الطريقتين.</span><span style="color:#a894a6">&lt;/</span><span style="color:#881280">p</span><span style="color:#a894a6">&gt;</span></span></div><svg class="a" style="left:591.80px;top:155.16px" width="5" height="6" viewBox="0 0 5 6"><path d="M0.2 0.6 L4.4 3 L0.2 5.4Z" fill="#555"/></svg><div class="a mono" style="left:597.1px;top:156.16px;"><span style="color:#a894a6">&lt;</span><span style="color:#881280">p</span><span style="color:#a894a6">&gt;</span><span style="color:#a894a6">…</span><span style="color:#a894a6">&lt;/</span><span style="color:#881280">p</span><span style="color:#a894a6">&gt;</span></div><div class="a mono" style="left:590.1px;top:164.88px;"><span style="color:#a894a6">&lt;/</span><span style="color:#881280">div</span><span style="color:#a894a6">&gt;</span></div><div class="a mono" style="left:583px;top:173.60px;"><span style="color:#a894a6">&lt;/</span><span style="color:#881280">div</span><span style="color:#a894a6">&gt;</span></div><div class="a mono" style="left:583px;top:182.32px;"><span style="color:#236e25">&lt;!-- Start Comment --&gt;</span></div><svg class="a" style="left:576.80px;top:190.04px" width="5" height="6" viewBox="0 0 5 6"><path d="M0.2 0.6 L4.4 3 L0.2 5.4Z" fill="#555"/></svg><div class="a mono" style="left:583px;top:191.04px;"><span style="color:#a894a6">&lt;</span><span style="color:#881280">div</span> <span style="color:#994500">class</span><span style="color:#a894a6">="</span><span style="color:#1a1aa6">comment idthing lvl-1 hasChildren com-11</span><span style="color:#a894a6">"</span></div><div class="a mono" style="left:576.5px;top:199.76px;"><span style="color:#994500">id</span><span style="color:#a894a6">="</span><span style="color:#1a1aa6">comment-175688</span><span style="color:#a894a6">"</span> <span style="color:#994500">comment-index</span><span style="color:#a894a6">="</span><span style="color:#1a1aa6">11</span><span style="color:#a894a6">"</span><span style="color:#a894a6">&gt;</span><span style="color:#a894a6">…</span><span style="color:#a894a6">&lt;/</span><span style="color:#881280">div</span><span style="color:#a894a6">&gt;</span></div><div class="a mono" style="left:583px;top:208.48px;"><span style="color:#236e25">&lt;!-- End Comment --&gt;</span></div><div class="a" style="left:790.1px;top:43.2px;width:9.899999999999977px;height:174.5px;background:#f1f1f1;border-left:0.6px solid #e6e6e6"></div><div class="a" style="left:792.1px;top:98.1px;width:6.699999999999977px;height:25.9px;background:#c1c1c1"></div><svg class="a" style="left:792.6px;top:46.2px" width="5" height="4" viewBox="0 0 5 4"><path d="M0.3 3.3 L4.5 3.3 L2.4 0.8Z" fill="#555"/></svg><svg class="a" style="left:792.6px;top:210.7px" width="5" height="4" viewBox="0 0 5 4"><path d="M0.3 0.7 L4.5 0.7 L2.4 3.2Z" fill="#555"/></svg><div class="a" style="left:475.7px;top:217.6px;width:324.3px;height:9.4px;background:#fff;border-top:0.7px solid #d0d0d0"></div><div class="a" style="left:480.6px;top:224px;width:5.2px;height:0.8px;background:#666"></div><div class="a" style="left:494.40px;top:217.50px;line-height:10px;font-family:'Liberation Sans',sans-serif;font-size:6.45px;color:#555;transform-origin:0 50%;transform:scaleX(0.9209);">div</div><div class="a" style="left:510.40px;top:217.50px;line-height:10px;font-family:'Liberation Sans',sans-serif;font-size:6.45px;color:#555;transform-origin:0 50%;transform:scaleX(0.9788);">#post_details</div><div class="a" style="left:556.00px;top:217.50px;line-height:10px;font-family:'Liberation Sans',sans-serif;font-size:6.45px;color:#555;transform-origin:0 50%;transform:scaleX(0.9694);">div</div><div class="a" style="left:573.00px;top:217.50px;line-height:10px;font-family:'Liberation Sans',sans-serif;font-size:6.45px;color:#555;transform-origin:0 50%;transform:scaleX(0.9694);">div</div><div class="a" style="left:589.40px;top:217.50px;line-height:10px;font-family:'Liberation Sans',sans-serif;font-size:6.45px;color:#555;transform-origin:0 50%;transform:scaleX(0.9694);">div</div><div class="a" style="left:606.00px;top:217.50px;line-height:10px;font-family:'Liberation Sans',sans-serif;font-size:6.45px;color:#555;transform-origin:0 50%;transform:scaleX(0.9694);">div</div><div class="a" style="left:623.40px;top:217.50px;line-height:10px;font-family:'Liberation Sans',sans-serif;font-size:6.45px;color:#555;transform-origin:0 50%;transform:scaleX(1.0148);">#post-comments</div><div class="a" style="left:679.60px;top:217.50px;line-height:10px;font-family:'Liberation Sans',sans-serif;font-size:6.45px;color:#555;transform-origin:0 50%;transform:scaleX(1.0043);">#comment-175687</div><div class="a" style="left:742.60px;top:217.50px;line-height:10px;font-family:'Liberation Sans',sans-serif;font-size:6.45px;color:#555;transform-origin:0 50%;transform:scaleX(1.0179);">div</div><div class="a" style="left:759.00px;top:217.50px;line-height:10px;font-family:'Liberation Sans',sans-serif;font-size:6.45px;color:#555;transform-origin:0 50%;transform:scaleX(1.0906);">div</div><div class="a" style="left:772.6px;top:217.4px;width:11.2px;height:9.6px;background:#3b7fd9"></div><div class="a" style="left:776.00px;top:219.30px;line-height:10px;font-family:'Liberation Sans',sans-serif;font-size:6.80px;color:#fff;transform-origin:0 50%;transform:scaleX(1.1924);">p</div><div class="a" style="left:475.7px;top:227px;width:324.3px;height:16.3px;background:#f3f3f3;border-top:0.7px solid #d6d6d6;border-bottom:0.7px solid #d0d0d0"></div><div class="a" style="left:478.6px;top:229px;width:23.9px;height:14.5px;background:#fff;border:0.7px solid #d6d6d6;border-bottom:none"></div><div class="a" style="left:481.70px;top:232.20px;line-height:10px;font-family:'Liberation Sans',sans-serif;font-size:7.96px;color:#333;transform-origin:0 50%;transform:scaleX(0.8118);">Styles</div><div class="a" style="left:505.70px;top:232.20px;line-height:10px;font-family:'Liberation Sans',sans-serif;font-size:7.96px;color:#444;transform-origin:0 50%;transform:scaleX(0.8404);">Event Listeners</div><div class="a" style="left:558.20px;top:232.20px;line-height:10px;font-family:'Liberation Sans',sans-serif;font-size:7.96px;color:#444;transform-origin:0 50%;transform:scaleX(0.8698);">DOM Breakpoints</div><div class="a" style="left:618.30px;top:232.20px;line-height:10px;font-family:'Liberation Sans',sans-serif;font-size:7.96px;color:#444;transform-origin:0 50%;transform:scaleX(0.8848);">Properties</div><div class="a" style="left:674.2px;top:243.3px;width:0.8px;height:174px;background:#d0d0d0"></div><div class="a" style="left:478.30px;top:247.20px;line-height:10px;font-family:'Liberation Sans',sans-serif;font-size:7.54px;color:#a8a8a8;transform-origin:0 50%;transform:scaleX(0.8180);">Filter</div><div class="a" style="left:475.7px;top:259.1px;width:190.09999999999997px;height:0.7px;background:#e0e0e0"></div><div class="a" style="left:619.3px;top:250.6px;width:6px;height:1.1px;background:#3a3a3a"></div><div class="a" style="left:621.75px;top:248.2px;width:1.1px;height:5.9px;background:#3a3a3a"></div><svg class="a" style="left:624.5px;top:253.5px" width="3" height="3" viewBox="0 0 3 3"><path d="M2.6 0.2 V2.6 H0.2Z" fill="#333"/></svg><svg class="a" style="left:634px;top:247px" width="10" height="9" viewBox="0 0 10 9"><path d="M2.5 0.8 H7.2 M3.4 0.8 V4.2 L2 5.6 H7.8 L6.3 4.2 V0.8 M4.85 5.6 V8.6" fill="#333" stroke="#333" stroke-width="1"/></svg><svg class="a" style="left:650px;top:247.5px" width="11" height="8" viewBox="0 0 11 8"><path d="M0.8 4 L4 0.8 L7.2 4 L4 7.2Z" fill="#333"/><path d="M6 1.5 L8.6 4 L6 6.5" fill="none" stroke="#333" stroke-width="1"/></svg><div class="a" style="left:665.8px;top:243.4px;width:8.4px;height:174px;background:#f1f1f1;border-left:0.6px solid #e6e6e6"></div><div class="a" style="left:667.8px;top:253.8px;width:5.2px;height:13.8px;background:#c1c1c1"></div><svg class="a" style="left:668.3px;top:246.4px" width="5" height="4" viewBox="0 0 5 4"><path d="M0.3 3.3 L4.5 3.3 L2.4 0.8Z" fill="#555"/></svg><svg class="a" style="left:668.3px;top:410.4px" width="5" height="4" viewBox="0 0 5 4"><path d="M0.3 0.7 L4.5 0.7 L2.4 3.2Z" fill="#555"/></svg><div class="a mono" style="left:478.3px;top:261.55px;"><span style="color:#222">element.style {</span></div><div class="a mono" style="left:478.3px;top:271.20px;"><span style="color:#222">}</span></div><div class="a" style="left:475.7px;top:280.6px;width:190.09999999999997px;height:0.7px;background:#e3e3e3"></div><div class="a mono" style="left:478.3px;top:283.00px;color:#6a6a6a"><span id="r18" style="display:inline-block;transform-origin:0 50%;transform:scaleX(1.3124);text-decoration:underline;text-decoration-color:#888">36268--كيف-يمكن-اختيار-المقاسات-المناسبه</span></div><div class="a mono" style="left:478.3px;top:291.30px;color:#6a6a6a;direction:rtl"><span id="r19" style="display:inline-block;transform-origin:0 50%;transform:scaleX(1.1999);text-decoration:underline;text-decoration-color:#888">للخط-حتى-تعمل-علي-كافة-الاجهزة-بشكل-مناسب</span></div><div class="a mono" style="left:478.3px;top:300.00px;"><span style="color:#777">media="screen and (max-width: 980px)"</span></div><div class="a mono" style="left:478.3px;top:308.80px;"><span style="color:#222">@media only</span></div><div class="a mono" style="left:547.6px;top:308.80px;text-decoration:underline;text-decoration-color:#888"><span style="color:#444">responsive-de46…45f7566f.css:1</span></div><div class="a mono" style="left:478.3px;top:316.60px;"><span style="color:#222">screen and (max-width: 830px)</span></div><div class="a mono" style="left:478.3px;top:325.10px;"><span style="color:#222">.comment p,</span></div><div class="a mono" style="left:547.6px;top:325.10px;text-decoration:underline;text-decoration-color:#888"><span style="color:#444">responsive-de46…45f7566f.css:1</span></div><div class="a mono" style="left:478.3px;top:333.20px;"><span style="color:#777">.comment h1, .comment .h1, .comment h2,</span></div><div class="a mono" style="left:478.3px;top:341.50px;"><span style="color:#777">.comment .h2, .comment h3, .comment .h3 </span><span style="color:#222">{</span></div><div class="a mono" style="left:488.7px;top:351.10px;"><span style="color:#c80000">padding-right</span><span style="color:#222">: 10px;</span></div><div class="a mono" style="left:488.7px;top:359.35px;"><span style="color:#c80000">padding-left</span><span style="color:#222">: 10px;</span></div><div class="a mono" style="left:488.7px;top:367.60px;"><span style="color:#c80000">line-height</span><span style="color:#222">: 1.8;</span></div><div class="a mono" style="left:488.7px;top:375.85px;"><span style="color:#c80000">padding-bottom</span><span style="color:#222">: 10px;</span></div><div class="a mono" style="left:478.3px;top:384.10px;"><span style="color:#222">}</span></div><div class="a" style="left:475.7px;top:394.4px;width:190.09999999999997px;height:0.7px;background:#e3e3e3"></div><div class="a mono" style="left:478.3px;top:396.80px;color:#6a6a6a"><span id="r20" style="display:inline-block;transform-origin:0 50%;transform:scaleX(1.3124);text-decoration:underline;text-decoration-color:#888">36268--كيف-يمكن-اختيار-المقاسات-المناسبه</span></div><div class="a mono" style="left:478.3px;top:405.10px;color:#6a6a6a;direction:rtl"><span id="r21" style="display:inline-block;transform-origin:0 50%;transform:scaleX(1.1999);text-decoration:underline;text-decoration-color:#888">للخط-حتى-تعمل-علي-كافة-الاجهزة-بشكل-مناسب</span></div><div class="a mono" style="left:478.3px;top:413.10px;"><span style="color:#777">media="all"</span></div><div class="a" style="left:684px;top:255.5px;width:97px;height:86.8px;background:#f9cc9d;border:0.9px dotted #444"></div><div class="a" style="left:691.3px;top:268.3px;width:82.7px;height:61.6px;background:#fddd9b;border:0.9px solid #333"></div><div class="a" style="left:699px;top:279.8px;width:67.9px;height:37.2px;background:#c3d08b;border:0.8px dashed #777"></div><div class="a" style="left:709.4px;top:292.7px;width:47.3px;height:12.9px;background:#8cb6c0;border:0.7px solid #8a8a8a"></div><div class="a ui" style="left:689.6px;top:259.8px;color:#333;font-size:6.6px">margin</div><div class="a ui" style="left:696.8px;top:272.0px;color:#333;font-size:6.6px">border</div><div class="a ui" style="left:704px;top:284.3px;color:#333;font-size:6.6px">padding</div><div class="a ui" style="left:703px;top:259.80px;width:60px;text-align:center;color:#333;font-size:6.5px">–</div><div class="a ui" style="left:703px;top:272.00px;width:60px;text-align:center;color:#333;font-size:6.5px">–</div><div class="a ui" style="left:703px;top:284.30px;width:60px;text-align:center;color:#333;font-size:6.5px">–</div><div class="a ui" style="left:703px;top:296.30px;width:60px;text-align:center;color:#333;font-size:6.5px">310 × 108</div><div class="a ui" style="left:675.1px;top:296.30px;width:60px;text-align:center;color:#333;font-size:6.5px">10</div><div class="a ui" style="left:731.5px;top:296.30px;width:60px;text-align:center;color:#333;font-size:6.5px">10</div><div class="a ui" style="left:665.5px;top:296.30px;width:60px;text-align:center;color:#333;font-size:6.5px">–</div><div class="a ui" style="left:740.3px;top:296.30px;width:60px;text-align:center;color:#333;font-size:6.5px">–</div><div class="a ui" style="left:658.3px;top:296.30px;width:60px;text-align:center;color:#333;font-size:6.5px">–</div><div class="a ui" style="left:747.6px;top:296.30px;width:60px;text-align:center;color:#333;font-size:6.5px">–</div><div class="a ui" style="left:703px;top:308.60px;width:60px;text-align:center;color:#333;font-size:6.5px">10</div><div class="a ui" style="left:703px;top:321.10px;width:60px;text-align:center;color:#333;font-size:6.5px">–</div><div class="a ui" style="left:703px;top:333.50px;width:60px;text-align:center;color:#333;font-size:6.5px">10</div><div class="a" style="left:790.1px;top:243.4px;width:9.899999999999977px;height:174px;background:#f1f1f1;border-left:0.6px solid #e6e6e6"></div><div class="a" style="left:792.1px;top:254.4px;width:6.699999999999977px;height:50.2px;background:#c1c1c1"></div><svg class="a" style="left:792.6px;top:246.4px" width="5" height="4" viewBox="0 0 5 4"><path d="M0.3 3.3 L4.5 3.3 L2.4 0.8Z" fill="#555"/></svg><svg class="a" style="left:792.6px;top:410.4px" width="5" height="4" viewBox="0 0 5 4"><path d="M0.3 0.7 L4.5 0.7 L2.4 3.2Z" fill="#555"/></svg><div class="a" style="left:675px;top:354px;width:115.1px;height:0.7px;background:#e3e3e3"></div><div class="a" style="left:678.20px;top:358.70px;line-height:10px;font-family:'Liberation Sans',sans-serif;font-size:7.54px;color:#a8a8a8;transform-origin:0 50%;transform:scaleX(0.8239);">Filter</div><div class="a" style="left:752.5px;top:360px;width:5.4px;height:5.4px;border:0.7px solid #aaa;border-radius:1px;background:#fff"></div><div class="a" style="left:761.00px;top:358.70px;line-height:10px;font-family:'Liberation Sans',sans-serif;font-size:7.54px;color:#555;transform-origin:0 50%;transform:scaleX(0.8801);">Show all</div><div class="a" style="left:675px;top:369.8px;width:115.1px;height:0.7px;background:#e3e3e3"></div><div class="a" style="left:675px;top:370.5px;width:115.1px;height:17.5px;background:#f5f5f5"></div><div class="a" style="left:675px;top:388.2px;width:115.1px;height:17.3px;background:#fff"></div><div class="a" style="left:675px;top:406.3px;width:115.1px;height:11px;background:#f5f5f5"></div><svg class="a" style="left:678.40px;top:372.00px" width="5" height="6" viewBox="0 0 5 6"><path d="M0.2 0.6 L4.4 3 L0.2 5.4Z" fill="#555"/></svg><div class="a mono" style="left:683.6px;top:373.00px;"><span style="color:#c80000">box-sizing</span></div><div class="a mono" style="left:683.6px;top:380.80px;"><span style="color:#222">border-box</span></div><svg class="a" style="left:678.40px;top:388.90px" width="5" height="6" viewBox="0 0 5 6"><path d="M0.2 0.6 L4.4 3 L0.2 5.4Z" fill="#555"/></svg><div class="a mono" style="left:683.6px;top:389.90px;"><span style="color:#c80000">color</span></div><div class="a" style="left:684.9px;top:399.3px;width:4.9px;height:4.9px;background:#484848;border:0.5px solid #222"></div><div class="a mono" style="left:691.1px;top:398.20px;"><span style="color:#222">rgb(72, 72, 72)</span></div><svg class="a" style="left:678.40px;top:406.90px" width="5" height="6" viewBox="0 0 5 6"><path d="M0.2 0.6 L4.4 3 L0.2 5.4Z" fill="#555"/></svg><div class="a mono" style="left:683.6px;top:407.90px;"><span style="color:#c80000">direction</span></div><div class="a" style="left:0px;top:416.8px;width:800px;height:1.2px;background:#2a2a2a"></div><svg class="a" style="left:0;top:0" width="800" height="60" viewBox="0 0 800 60"><g fill="none" stroke="#e8241c" stroke-width="1.3" stroke-linecap="round" stroke-linejoin="round"><path d="M134.5 0.7 C130 2.5 127 4 124 6 C120.5 8.5 118 10.5 116.5 12 C114.5 14 113.2 15.8 112.7 17.2 C112.2 18.6 111.9 19.8 111.7 21"/><path d="M111.2 14.2 L111.7 21 L120.2 18.7"/><path d="M123 24.8 C127 27 130 28 131.5 30.5 C133.2 32.5 133.8 34 133.7 35.2 C133.5 38.5 132.5 40.5 130.7 42 C127 44.3 123 45 118 45.7 C112 46.8 106 47.8 100 48 C94 48.2 88 48.2 82 48 C75 47.5 68 46.5 62.5 45 C57 43.5 53 42.5 51.2 41.2 C49.5 40 49 39 49 37.5 C49 34.5 49.8 32.5 51.2 30.7 C53.5 29 56 28.3 59.5 27.7 C65 26.8 71 26.4 77.5 26.2 C85 26 92 26.6 100 27 C107 27.3 114 27.2 121 27"/><path d="M498.4 0.2 C500.3 5 502.8 10 503.4 15 C503.9 19 504.3 22 505.2 25.8"/><path d="M501.6 20.4 L505.2 25.8 L510.6 19.6"/><path d="M505 27.3 C502 27.4 499 27.3 497 28.6 C495 29.6 494.6 31 494.7 33.5 C494.8 37 495.3 40.5 496.6 42.3 C498 43.6 503 43.4 508.5 43 C511.8 42.6 514 40 515.4 36.8 C516.2 34.8 515.6 33.4 513.4 32.6 C511.6 31.8 511.4 29.8 511 28.2 C510.3 27 508 27.2 505 27.3"/></g></svg></body></html>
